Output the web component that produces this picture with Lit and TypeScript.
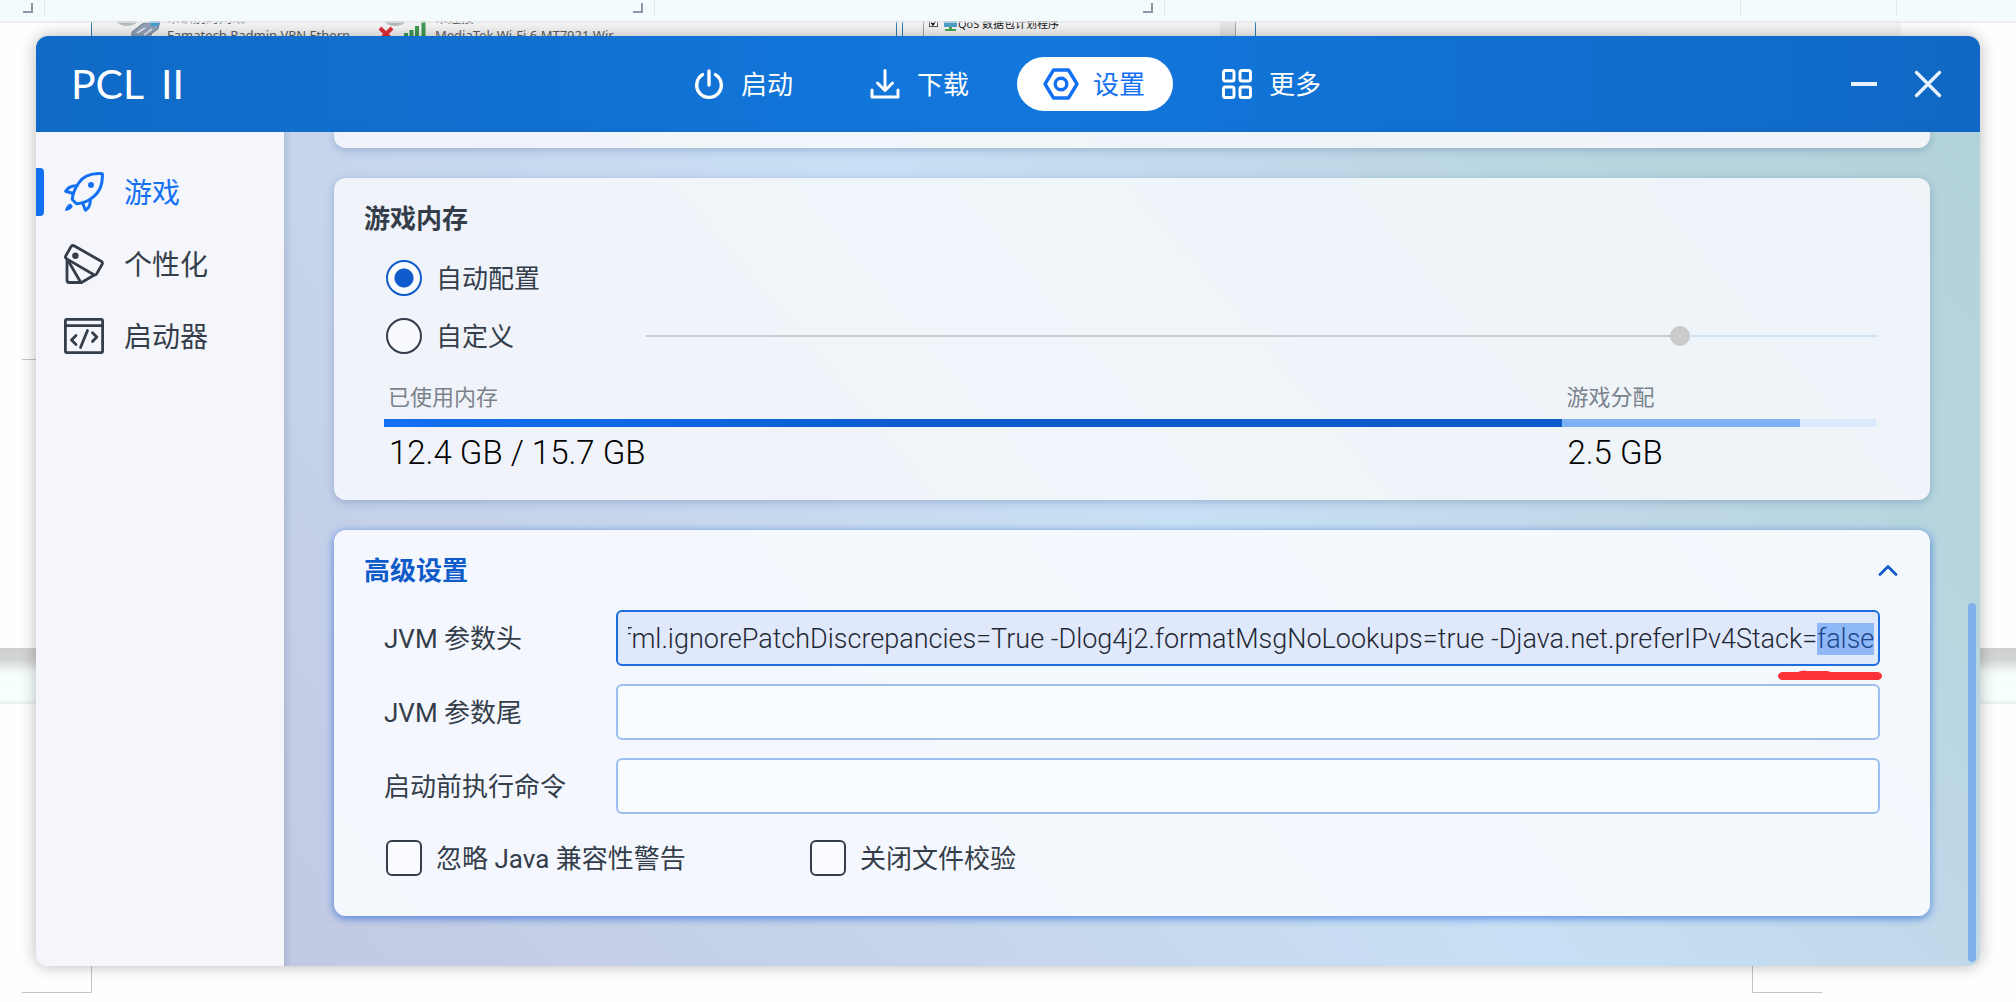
import { LitElement, html, css, svg } from "lit";
import { customElement, state, query } from "lit/decorators.js";
import { classMap } from "lit/directives/class-map.js";
import { styleMap } from "lit/directives/style-map.js";

const icons = {
  power: svg`<svg viewBox="0 0 36 36" fill="none" stroke="currentColor" stroke-width="3.4" stroke-linecap="round">
    <path d="M18 5v14"/><path d="M11.6 8.6a12.3 12.3 0 1 0 12.8 0"/></svg>`,
  download: svg`<svg viewBox="0 0 36 36" fill="none" stroke="currentColor" stroke-width="3" stroke-linecap="round" stroke-linejoin="round">
    <path d="M18 4.5v19"/><path d="M10.5 17l7.500 7.500 7.500-7.500"/><path d="M5 24v7h26v-7"/></svg>`,
  settings: svg`<svg viewBox="0 0 36 36" fill="none" stroke="currentColor" stroke-width="3.4" stroke-linejoin="round">
    <path d="M10.500 4h15L34 18l-8.500 14h-15L2 18z"/><circle cx="18" cy="18" r="5.800"/></svg>`,
  more: svg`<svg viewBox="0 0 36 36" fill="none" stroke="currentColor" stroke-width="3">
    <rect x="4.500" y="4.500" width="10.500" height="10.500" rx="2"/><rect x="21" y="4.500" width="10.500" height="10.500" rx="2"/>
    <rect x="4.500" y="21" width="10.500" height="10.500" rx="2"/><rect x="21" y="21" width="10.500" height="10.500" rx="2"/></svg>`,
  rocket: svg`<svg viewBox="0 0 40 40" fill="none" stroke="currentColor" stroke-width="3" stroke-linejoin="round" stroke-linecap="round">
    <path d="M38.300 1.700C28 1 19 4 14.300 11.500C11 16.500 8.500 21 8.300 27.500L12.500 31.700C19 31.500 24.500 29 29 25.200C36.500 19.500 39 11.500 38.300 1.700Z"/>
    <path d="M13 13.800C8 13.500 4 15.500 1.600 19.200L9.200 21.500"/>
    <path d="M18.600 31L21.500 38.300C25 36 26.600 32 26.200 27.500"/>
    <circle cx="27" cy="13" r="3" fill="currentColor" stroke="none"/>
    <path d="M6.500 31.500C3.500 32.500 1.500 35 1 39C5 38.500 8 37 8.800 34.200Z" fill="currentColor" stroke="none"/></svg>`,
  swatch: svg`<svg viewBox="0 0 40 40" fill="none" stroke="currentColor" stroke-width="2.800" stroke-linejoin="round" stroke-linecap="round">
    <path d="M10.500 2C9 1.200 7.500 1.700 6.800 3L1.800 11.800C1.200 13 1.500 14.200 2.700 14.900L29.500 30.500C30.700 31.200 32 30.800 32.700 29.700L38 20.500C38.700 19.200 38.300 18 37.200 17.300Z"/>
    <path d="M3 15.500V36C3 37.700 4 38.500 5.500 38.500H17.500L29.500 31.500"/>
    <path d="M4 16.500L16.500 38"/>
    <circle cx="11.400" cy="11.800" r="3.200" fill="currentColor" stroke="none"/></svg>`,
  code: svg`<svg viewBox="0 0 40 40" fill="none" stroke="currentColor" stroke-width="2.800" stroke-linejoin="round" stroke-linecap="round">
    <rect x="1.400" y="3.400" width="37.200" height="33.200" rx="1.500"/><path d="M2 9.700h36"/>
    <path d="M12 19.500L7.500 24l4.500 4.500"/><path d="M28.500 16.800L32.800 21l-4.300 4.500"/><path d="M23.500 14.500L16.500 31.500"/></svg>`,
  minimize: svg`<svg viewBox="0 0 30 30" fill="none" stroke="currentColor" stroke-width="4"><path d="M2 15h26"/></svg>`,
  close: svg`<svg viewBox="0 0 30 30" fill="none" stroke="currentColor" stroke-width="3.400" stroke-linecap="round"><path d="M3.500 3.500l23 23M26.500 3.500l-23 23"/></svg>`,
  chevron: svg`<svg viewBox="0 0 24 24" fill="none" stroke="currentColor" stroke-width="2.800" stroke-linecap="round" stroke-linejoin="round"><path d="M4 16.500l8-8 8 8"/></svg>`,
};

/** The document editor and system dialogs that show around the launcher window. */
@customElement("desktop-backdrop")
class DesktopBackdrop extends LitElement {
  static styles = css`
    :host { display: block; position: absolute; inset: 0; overflow: hidden; }
    .scene { display: block; width: 100%; height: 100%; }
    .caption { font-family: "Noto Sans", "Noto Sans CJK SC", sans-serif; font-size: 13px; fill: #5f5f5f; }
    .item { font-family: "Open Sans", "Noto Sans CJK SC", sans-serif; font-size: 11px; fill: #111; }
  `;
  render() {
    return html`<svg class="scene" aria-hidden="true">
      <defs>
        <linearGradient id="gap" x1="0" y1="0" x2="0" y2="1">
          <stop offset="0" stop-color="#cfd0d0"/><stop offset=".2" stop-color="#d3d4d4"/>
          <stop offset=".46" stop-color="#f6fdfd"/><stop offset=".9" stop-color="#f8ffff"/><stop offset="1" stop-color="#e9efef"/>
        </linearGradient>
      </defs>
      <rect width="100%" height="100%" fill="#fefefe"/>
      <rect x="91" y="21" width="1810" height="20" fill="#f5f5f5"/>
      <rect y="648" width="100%" height="56" fill="url(#gap)"/>
      <g stroke="#2b7fb0" stroke-width="1">
        <path d="M91.500 21v20M896.500 21v20M902.500 21v20M1255.500 21v20"/>
      </g>
      <rect x="1256" y="21" width="645" height="20" fill="#f5f5f5"/>
      <path d="M923.500 21v20M1235.500 21v20" stroke="#a5a5a5"/>
      <rect x="1220" y="21" width="15" height="20" fill="#e6e6e6"/>
      <g fill="#b9bbbd"><ellipse cx="127" cy="21" rx="10" ry="5"/><ellipse cx="395" cy="21" rx="10" ry="5"/></g>
      <path d="M132 32l10-8 8-2 10-1-2 8-6 4-4 8h-16z" fill="#93a1b8" stroke="#6f7d94"/>
      <path d="M137 33l8-5M144 35l8-6" stroke="#dde5f0" stroke-width="2"/>
      <path d="M150 20h10l-2 6h-7z" fill="#3e9fd4"/>
      <path d="M380 28l12 12M392 28l-12 12" stroke="#df2f35" stroke-width="4"/>
      <path d="M406 40v-7M411.500 40v-10M417 40V26M423.500 40V21" stroke="#3f9a52" stroke-width="4"/>
      <text class="caption" x="167" y="22">未识别的网络</text>
      <text class="caption" x="435" y="22">未连接</text>
      <text class="caption" x="167" y="40">Famatech Radmin VPN Ethern</text>
      <text class="caption" x="435" y="40">MediaTek Wi-Fi 6 MT7921 Wir</text>
      <rect x="929.500" y="17.500" width="8" height="9" fill="#fff" stroke="#555"/>
      <path d="M931 22l2 3 4-6" fill="none" stroke="#111" stroke-width="1.500"/>
      <path d="M944 20h13v7h-13z" fill="#4d9fc9"/><path d="M949 27h3v3h-3z" fill="#4aa84e"/><path d="M945 29h11v2h-11z" fill="#4aa84e"/>
      <text class="item" x="958" y="28">QoS 数据包计划程序</text>
      <rect width="100%" height="21" fill="#f3fbfd"/>
      <rect y="21" width="100%" height="2" fill="#e4e8e9" opacity=".7"/>
      <path d="M44.500 0v16M654.500 0v16M1164.500 0v16M1740.500 0v16M1896.500 0v16" stroke="#e1e6ea"/>
      <path d="M23 12h9V3M633 12h9V3M1143 12h9V3" fill="none" stroke="#8b94a8" stroke-width="2"/>
      <path d="M22 359.500h20M91.500 960v32.500H22M1752.500 960v32.500h70" fill="none" stroke="#c4c4c4"/>
    </svg>`;
  }
}

@customElement("nav-bar")
class NavBar extends LitElement {
  static styles = css`
    :host { display: block; }
    .bar {
      display: grid; grid-template-columns: 1fr auto 1fr; align-items: center; height: 96px; padding: 0 37px 0 35px;
      color: #fff; background: linear-gradient(90deg, #106ac6, #1277dd 50%, #1068c4);
    }
    .brand { display: flex; gap: 17px; font: 400 41px/48px Lato, sans-serif; }
    .tabs { display: flex; gap: 20px; }
    button { font: inherit; color: inherit; border: 0; background: none; margin: 0; padding: 0; cursor: pointer; }
    .tab { display: flex; align-items: center; gap: 14px; height: 54px; padding: 0 28px 0 26px; border-radius: 27px; font-size: 26px; line-height: 36px; }
    .tab span { padding-top: 2px; }
    .tab svg { width: 36px; height: 36px; }
    .tab.on { background: #fff; color: #1370f3; }
    .actions { display: flex; justify-content: flex-end; gap: 34px; color: #e6f1fd; }
    .actions svg { display: block; width: 30px; height: 30px; }
  `;
  @state() private current = "settings";
  private tabs: [keyof typeof icons, string][] = [["power", "启动"], ["download", "下载"], ["settings", "设置"], ["more", "更多"]];
  render() {
    return html`<header class="bar">
      <div class="brand"><span>PCL</span><span>II</span></div>
      <nav class="tabs">
        ${this.tabs.map(([id, label]) => html`<button class=${classMap({ tab: true, on: this.current === id })}
          @click=${() => (this.current = id)}>${icons[id]}<span>${label}</span></button>`)}
      </nav>
      <div class="actions">
        <button aria-label="最小化">${icons.minimize}</button>
        <button aria-label="关闭">${icons.close}</button>
      </div>
    </header>`;
  }
}

@customElement("side-menu")
class SideMenu extends LitElement {
  static styles = css`
    :host { display: block; }
    .menu { display: flex; flex-direction: column; padding-top: 24px; }
    .entry {
      display: grid; grid-template-columns: 8px 40px auto; align-items: center; justify-content: start; column-gap: 20px;
      height: 72px; padding: 0; border: 0; background: none; font: inherit; font-size: 28px; line-height: 40px; color: #343d4a; cursor: pointer;
    }
    .entry::before { content: ""; height: 48px; border-radius: 0 4px 4px 0; }
    .entry span { padding-top: 4px; }
    .entry svg { width: 40px; height: 40px; }
    .entry.on { color: #1370f3; }
    .entry.on::before { background: #1370f3; }
  `;
  @state() private current = "rocket";
  private entries: [keyof typeof icons, string][] = [["rocket", "游戏"], ["swatch", "个性化"], ["code", "启动器"]];
  render() {
    return html`<nav class="menu">
      ${this.entries.map(([id, label]) => html`<button class=${classMap({ entry: true, on: this.current === id })}
        @click=${() => (this.current = id)}>${icons[id]}<span>${label}</span></button>`)}
    </nav>`;
  }
}

const cardStyles = css`
  :host { display: block; }
  .card { border-radius: 12px; background: rgba(243, 246, 251, .92); box-shadow: 0 2px 8px rgba(52, 84, 140, .3); }
  .card.active { background: rgba(248, 251, 255, .93); box-shadow: 0 2px 8px rgba(20, 92, 214, .7); }
  .head { display: flex; justify-content: space-between; align-items: center; padding: 24px 30px 0; }
  h2 { margin: 0; font-size: 26px; line-height: 34px; height: 32px; font-weight: 700; }
  .choice { display: flex; align-items: center; gap: 14px; font-size: 26px; line-height: 36px; }
  .choice span { padding-top: 2px; }
  .choice input { appearance: none; box-sizing: border-box; width: 36px; height: 36px; margin: 0 0 0 2px; border: 2px solid #343d4a; background: rgba(255, 255, 255, .5); }
`;

@customElement("memory-card")
class MemoryCard extends LitElement {
  static styles = [cardStyles, css`
    .body { padding: 15px 50px 28px; }
    .row { display: grid; grid-template-columns: 262px 1fr; align-items: center; height: 58px; }
    .choice input { border-radius: 50%; }
    .choice input:checked { border-color: #0f5bcb; background: radial-gradient(circle, #0f5bcb 9px, rgba(255, 255, 255, .6) 10px); }
    .slider { appearance: none; height: 20px; margin: 0 2px 0 0; background: linear-gradient(90deg, #c9cbcd 84%, #d3e3f6 84%) center / 100% 2px no-repeat; }
    .slider::-webkit-slider-thumb { appearance: none; width: 20px; height: 20px; border-radius: 50%; background: #c9cacb; }
    .usage { display: flex; margin: 18px 4px 0 0; }
    .part { flex: 1 1 0; min-width: 0; white-space: nowrap; }
    .name { display: block; height: 28px; padding-left: 4px; font-size: 22px; line-height: 30px; color: #7b828c; }
    .fill { height: 8px; margin: 8px 0 5px; background: #dbe9fd; }
    .used .fill { background: linear-gradient(90deg, #1370f3, #0b5bcb 50%, #0f5bcb); }
    .game .fill { background: #80b0f6; }
    .size { display: block; height: 40px; padding-left: 5px; font-size: 33px; line-height: 42px; font-weight: 300; color: #000; }
  `];
  private parts = [
    { kind: "used", gb: 12.4, name: "已使用内存", size: "12.4 GB / 15.7 GB" },
    { kind: "game", gb: 2.5, name: "游戏分配", size: "2.5 GB" },
    { kind: "free", gb: 0.8, name: "", size: "" },
  ];
  render() {
    return html`<section class="card">
      <div class="head"><h2>游戏内存</h2></div>
      <div class="body">
        <div class="row"><label class="choice"><input type="radio" name="memory" checked /><span>自动配置</span></label></div>
        <div class="row">
          <label class="choice"><input type="radio" name="memory" /><span>自定义</span></label>
          <input class="slider" type="range" min="0" max="200" value="169" disabled aria-label="自定义" />
        </div>
        <div class="usage">
          ${this.parts.map((p) => html`<div class="part ${p.kind}" style=${styleMap({ flexGrow: String(p.gb) })}>
            <span class="name">${p.name}</span><div class="fill"></div><span class="size">${p.size}</span>
          </div>`)}
        </div>
      </div>
    </section>`;
  }
}

@customElement("advanced-card")
class AdvancedCard extends LitElement {
  static styles = [cardStyles, css`
    h2 { color: #0f5bcb; }
    .toggle { display: block; padding: 0; border: 0; background: none; color: #0f5bcb; height: 24px; }
    .toggle svg { display: block; width: 24px; height: 24px; }
    .body { padding: 24px 50px 32px; }
    .fields { display: grid; grid-template-columns: 232px 1fr; row-gap: 18px; align-items: center; font-size: 26px; line-height: 36px; }
    .fields label { padding-top: 2px; }
    .box { position: relative; display: flex; }
    .box input {
      box-sizing: border-box; width: 100%; height: 56px; padding: 2px 4px 0 10px; border: 2px solid #9bbff0; border-radius: 6px;
      background: rgba(250, 254, 254, .7); font: inherit; font-size: 27px; font-weight: 300; color: #1f2835; outline: none; caret-color: transparent;
    }
    .box input.editing { border-color: #1c6ddd; background: #e0e8fb; }
    .box input::selection { background: #8fb8f8; color: #1c468a; }
    .mark { position: absolute; right: -2px; top: 60px; width: 104px; height: 10px; z-index: 1; }
    .checks { display: grid; grid-template-columns: 424px auto; justify-content: start; align-items: center; height: 52px; margin-top: 18px; }
    .choice input { border-radius: 6px; }
  `];
  private head = "-Dfml.ignorePatchDiscrepancies=True -Dlog4j2.formatMsgNoLookups=true -Djava.net.preferIPv4Stack=false";
  @query("#jvm-head") private headInput!: HTMLInputElement;
  firstUpdated() {
    const el = this.headInput;
    el.focus();
    el.setSelectionRange(this.head.length - 5, this.head.length);
    el.scrollLeft = el.scrollWidth;
  }
  render() {
    return html`<section class="card active">
      <div class="head"><h2>高级设置</h2><button class="toggle" aria-label="收起">${icons.chevron}</button></div>
      <div class="body">
        <div class="fields">
          <label for="jvm-head">JVM 参数头</label>
          <div class="box">
            <input id="jvm-head" class="editing" type="text" spellcheck="false" .value=${this.head} />
            <svg class="mark" viewBox="0 0 104 10" aria-hidden="true">
              <path d="M4 2H20Q24-.5 29 1H50L52 2H100Q104 3 104 6T100 10H4Q0 9 0 6T4 2Z" fill="#fb3338"/>
            </svg>
          </div>
          <label for="jvm-tail">JVM 参数尾</label>
          <div class="box"><input id="jvm-tail" type="text" /></div>
          <label for="pre-command">启动前执行命令</label>
          <div class="box"><input id="pre-command" type="text" /></div>
        </div>
        <div class="checks">
          <label class="choice"><input type="checkbox" /><span>忽略 Java 兼容性警告</span></label>
          <label class="choice"><input type="checkbox" /><span>关闭文件校验</span></label>
        </div>
      </div>
    </section>`;
  }
}

@customElement("app-root")
class AppRoot extends LitElement {
  static styles = css`
    :host {
      display: flex; position: relative; box-sizing: border-box; min-height: 100vh; padding: 36px;
      font-family: Roboto, "Noto Sans CJK SC", sans-serif; color: #343d4a;
    }
    .window {
      position: relative; flex: 1; display: flex; flex-direction: column; overflow: hidden; border-radius: 12px;
      box-shadow: 0 0 16px rgba(0, 0, 0, .28);
    }
    .content { flex: 1; display: grid; grid-template-columns: 248px 1fr; }
    .side { background: #f4f6fb; }
    .page {
      position: relative; display: flex; flex-direction: column; gap: 30px; padding: 0 50px;
      background:
        linear-gradient(90deg, rgba(60, 90, 140, .16), transparent 8px),
        linear-gradient(50deg, #c2c9e3 0%, #c6d5ec 29%, #c8e0f5 53%, #c0d8e8 71%, #b6d5de 85%, #b3d3da 100%);
    }
    .previous { height: 16px; border-radius: 0 0 12px 12px; background: rgba(243, 246, 251, .92); box-shadow: 0 2px 8px rgba(52, 84, 140, .3); }
    .thumb { position: absolute; right: 4px; bottom: 4px; width: 8px; height: 43%; border-radius: 4px; background: #80b1ee; }
  `;
  render() {
    return html`<desktop-backdrop></desktop-backdrop>
      <div class="window">
        <nav-bar></nav-bar>
        <div class="content">
          <side-menu class="side"></side-menu>
          <main class="page">
            <div class="previous"></div>
            <memory-card></memory-card>
            <advanced-card></advanced-card>
            <div class="thumb"></div>
          </main>
        </div>
      </div>`;
  }
}
